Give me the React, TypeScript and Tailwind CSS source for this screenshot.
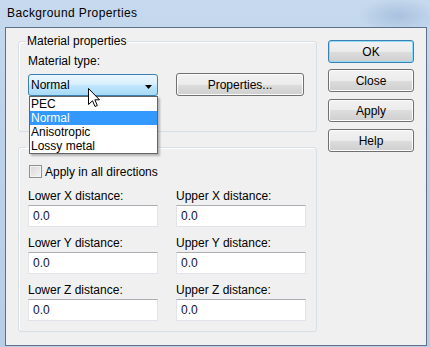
import React from 'react'

function Btn({ label, primary = false, className = '' }: { label: string; primary?: boolean; className?: string }) {
  return (
    <div
      className={`h-[23px] flex items-center justify-center rounded-[3px] border bg-[linear-gradient(180deg,#f2f2f2_0%,#ebebeb_50%,#dddddd_50%,#cfcfcf_100%)] ${
        primary
          ? 'border-[#3c7fb1] shadow-[inset_0_0_0_1px_#8fdcf8]'
          : 'border-[#707070] shadow-[inset_0_0_0_1px_#fcfcfc]'
      } ${className}`}
    >
      {label}
    </div>
  )
}

function Field({ label }: { label: string }) {
  return (
    <div className="flex flex-col">
      <span className="h-[15px] leading-[15px]">{label}</span>
      <input
        readOnly
        value="0.0"
        className="mt-[1px] h-[22px] w-[130px] pl-[4px] bg-white border border-[#e2e3ea] border-t-[#abadb3] outline-none text-[12px] text-[#10103a]"
      />
    </div>
  )
}

export default function App() {
  const items = ['PEC', 'Normal', 'Anisotropic', 'Lossy metal']

  return (
    <div className="w-[430px] h-[347px] flex flex-col font-['Liberation_Sans',Arial,sans-serif] text-[12px] leading-[14px] text-black bg-[linear-gradient(180deg,#c6d9ee_0%,#bcd1ea_40%,#b9cee6_100%)]">
      {/* Title bar */}
      <div className="h-[27px] shrink-0 pl-[7px] pt-[6px] text-[12px] tracking-[0.4px] bg-[radial-gradient(ellipse_40px_18px_at_398px_16px,#a9c2df,transparent)]">
        Background Properties
      </div>

      {/* Client area */}
      <div className="ml-[5px] w-[422px] h-[319px] border border-[#5d708a] bg-[#f0f0f0] flex pl-[12px] pt-[6px]">
        <div className="w-[299px] flex flex-col">
          {/* Material properties */}
          <fieldset className="border border-[#d5dfe5] rounded-[3px] shadow-[inset_1px_1px_0_#fff] pl-[9px] pt-[6px] pb-[35px]">
            <legend className="ml-[-2px] px-[1px] leading-[14px]">Material properties</legend>
            <div className="leading-[14px]">Material type:</div>
            <div className="mt-[5px] flex items-end">
              <div className="relative w-[130px] h-[22px] rounded-[3px] border border-[#3c7fb1] bg-[linear-gradient(180deg,#eaf6fd_0%,#d9f0fc_45%,#bee6fd_55%,#a7d9f5_100%)] flex items-center pl-[2px]">
                <span>Normal</span>
                <svg className="absolute right-[4px] top-[10px]" width="8" height="4" viewBox="0 0 8 4">
                  <path d="M0 0 H7 L3.5 4 Z" fill="#000" />
                </svg>

                {/* Open dropdown list */}
                <div className="absolute left-[0px] top-[21px] z-10 w-[129px] border border-[#646464] bg-white shadow-[2px_2px_2px_rgba(0,0,0,0.25)]">
                  {items.map(it => (
                    <div
                      key={it}
                      className={`h-[14px] leading-[14px] pl-[1px] ${it === 'Normal' ? 'bg-[#3399ff] text-white' : ''}`}
                    >
                      {it}
                    </div>
                  ))}
                </div>

                {/* Mouse cursor */}
                <svg className="absolute left-[59px] top-[13px] z-20" width="13" height="20" viewBox="0 0 13 20">
                  <path
                    d="M0.5 0.5 L0.5 16.5 L4.5 12.8 L7 18.5 L9.3 17.5 L6.9 11.8 L11.5 11.8 Z"
                    fill="#fff"
                    stroke="#000"
                    strokeWidth="1"
                  />
                </svg>
              </div>
              <Btn label="Properties..." className="ml-[18px] w-[128px]" />
            </div>
          </fieldset>

          {/* Distances (legend hidden under the open list) */}
          <fieldset className="mt-[8px] border border-[#d5dfe5] rounded-[3px] shadow-[inset_1px_1px_0_#fff] pl-[9px] pt-[11px] pb-[10px]">
            <legend className="ml-[-2px] w-[70px] h-[14px]" />
            <div className="flex items-center h-[13px]">
              <div className="ml-[1px] w-[13px] h-[13px] border border-[#8e8f8f] bg-[linear-gradient(135deg,#d6d6d6_0%,#f4f4f4_100%)] shadow-[inset_0_0_0_1px_#f4f4f4]" />
              <span className="ml-[3px]">Apply in all directions</span>
            </div>
            <div className="mt-[11px] grid grid-cols-[130px_130px] gap-x-[18px] gap-y-[9px]">
              <Field label="Lower X distance:" />
              <Field label="Upper X distance:" />
              <Field label="Lower Y distance:" />
              <Field label="Upper Y distance:" />
              <Field label="Lower Z distance:" />
              <Field label="Upper Z distance:" />
            </div>
          </fieldset>
        </div>

        {/* Dialog buttons */}
        <div className="ml-[11px] mt-[6px] w-[86px] flex flex-col">
          <Btn label="OK" primary />
          <Btn label="Close" className="mt-[6px]" />
          <Btn label="Apply" className="mt-[7px]" />
          <Btn label="Help" className="mt-[7px]" />
        </div>
      </div>
    </div>
  )
}
